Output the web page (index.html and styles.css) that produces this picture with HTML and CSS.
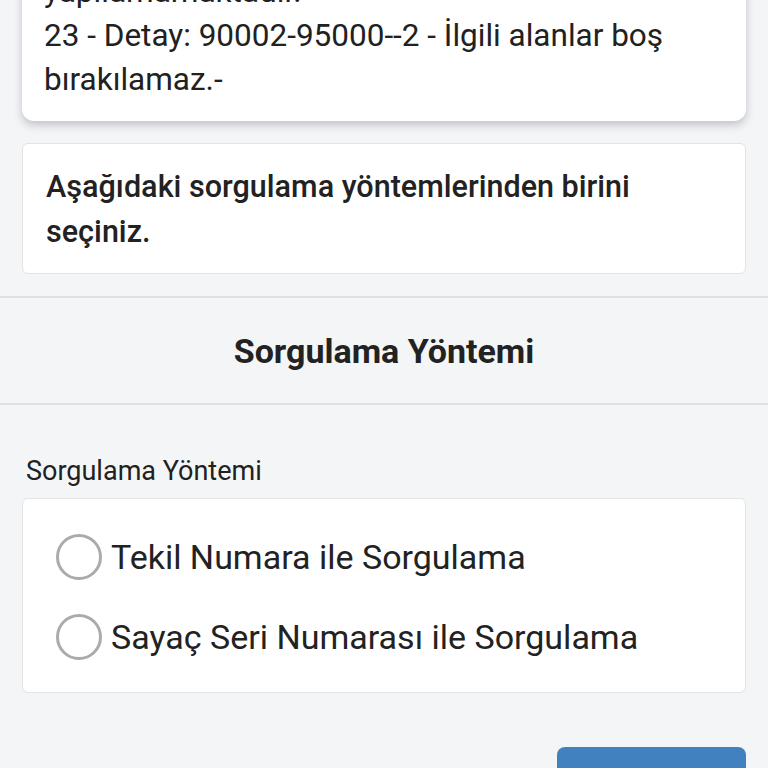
FILE: index.html
```html
<!DOCTYPE html>
<html lang="tr">
<head>
<meta charset="utf-8">
<title>Sorgulama</title>
<link rel="stylesheet" href="styles.css">
</head>
<body>
<div class="page">
  <div class="alert-card">
    <p class="alert-text">Sorgulama işlemi şu anda<br>yapılamamaktadır.<br>23 - Detay: 90002-95000--2 - İlgili alanlar boş bırakılamaz.-</p>
  </div>
  <div class="info-card">
    <p class="info-text">Aşağıdaki sorgulama yöntemlerinden birini seçiniz.</p>
  </div>
</div>
<div class="section-head">
  <h2 class="section-title">Sorgulama Yöntemi</h2>
</div>
<div class="page form">
  <div class="field-label">Sorgulama Yöntemi</div>
  <div class="radio-card">
    <label class="radio-row"><span class="radio-circle"></span><span class="radio-text">Tekil Numara ile Sorgulama</span></label>
    <label class="radio-row"><span class="radio-circle"></span><span class="radio-text">Sayaç Seri Numarası ile Sorgulama</span></label>
  </div>
  <div class="actions">
    <button class="primary-btn" type="button"></button>
  </div>
</div>
</body>
</html>
```
FILE: styles.css
```css
* { box-sizing: border-box; }
html, body { margin: 0; padding: 0; }
body {
  background: #f4f5f7;
  font-family: Roboto, "Noto Sans", "Liberation Sans", sans-serif;
  color: #212121;
  overflow: hidden;
  height: 768px;
}
.page { padding: 0 22px; }
.alert-card {
  margin-top: -94px;
  background: #fff;
  border-radius: 12px;
  box-shadow: 0 4px 8px rgba(60, 64, 90, 0.28);
  padding: 20px 22px 19px;
}
.alert-text {
  margin: 0;
  font-size: 31.5px;
  line-height: 44px;
}
.info-card {
  margin-top: 22px;
  background: #fff;
  border: 1px solid #e2e3e5;
  border-radius: 6px;
  padding: 20px 23px 19px;
}
.info-text {
  margin: 0;
  font-family: "Roboto Medium", Roboto, "Noto Sans", sans-serif;
  font-size: 30.5px;
  font-weight: 500;
  line-height: 45px;
  color: #222;
}
.section-head {
  margin-top: 22px;
  border-top: 2px solid #dedfe1;
  border-bottom: 2px solid #dedfe1;
  height: 109px;
  display: flex;
  align-items: center;
  justify-content: center;
}
.section-title {
  margin: 0;
  font-size: 34px;
  font-weight: 700;
  color: #222;
}
.form { padding-top: 46px; }
.field-label {
  font-size: 27px;
  line-height: 40px;
  padding-left: 4px;
  margin-bottom: 7px;
}
.radio-card {
  background: #fff;
  border: 1px solid #e2e3e5;
  border-radius: 6px;
  padding: 33px 33px 30px;
  display: flex;
  flex-direction: column;
  gap: 30px;
}
.radio-row {
  display: flex;
  align-items: center;
  height: 50px;
}
.radio-circle {
  width: 46px;
  height: 46px;
  border: 3px solid #ababab;
  border-radius: 50%;
  flex: none;
  margin-right: 9px;
}
.radio-text {
  font-size: 34px;
  color: #222;
}
.actions {
  display: flex;
  justify-content: flex-end;
  margin-top: 54px;
}
.primary-btn {
  width: 189px;
  height: 60px;
  background: #4181c0;
  border: none;
  border-radius: 8px;
}
```
